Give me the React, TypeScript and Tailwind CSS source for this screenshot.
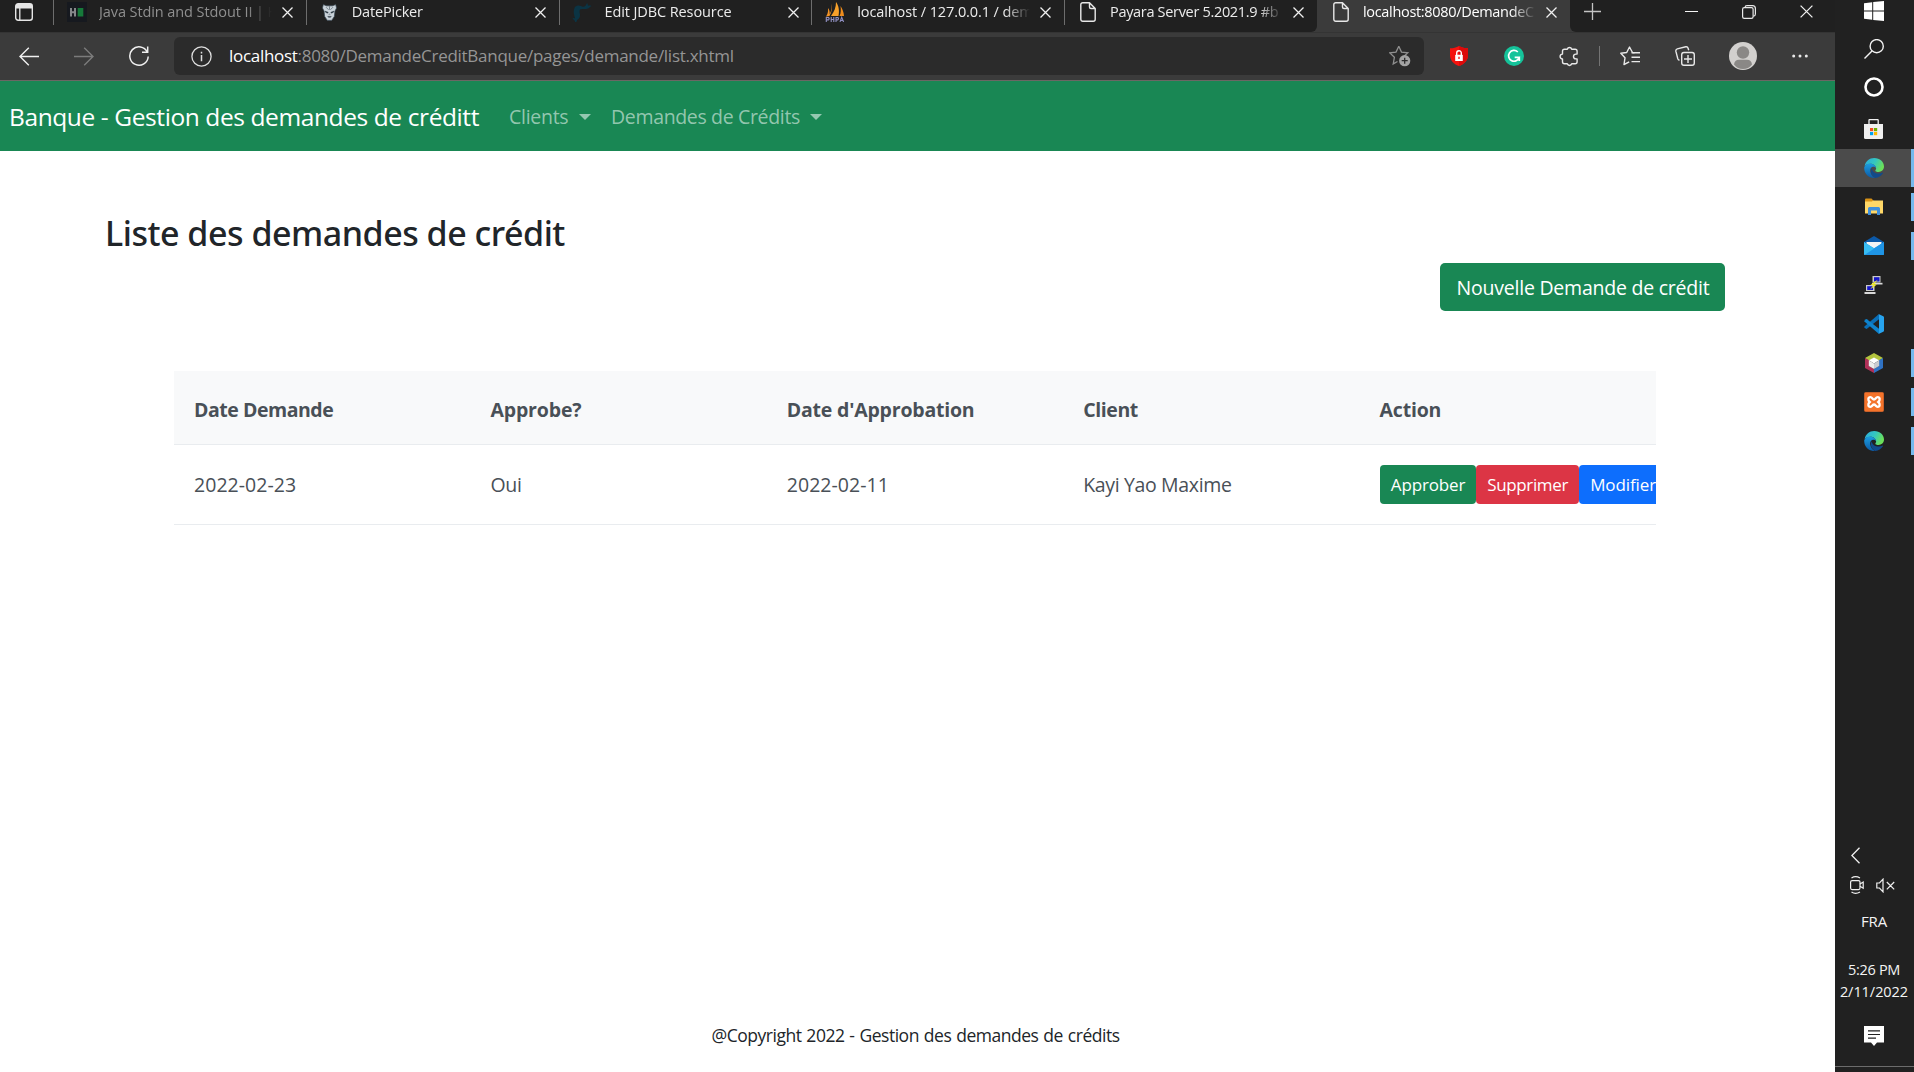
import type { ReactNode } from "react";

/* ---------- browser chrome icons ---------- */

const CloseX = ({ size = 11, width = 1.3 }: { size?: number; width?: number }) => (
  <svg width={size} height={size} viewBox="0 0 11 11" fill="none" stroke="#f0f0f0" strokeWidth={width} className="shrink-0">
    <path d="M.5.5l10 10M10.500.5l-10 10" />
  </svg>
);

const FileIcon = () => (
  <svg width="16" height="20" viewBox="0 0 16 20" fill="none" stroke="#e8e8e8" strokeWidth="1.4" strokeLinejoin="round">
    <path d="M9.500.8H2.700A1.900 1.900 0 0 0 .8 2.700v14.600a1.900 1.900 0 0 0 1.900 1.900h10.600a1.900 1.900 0 0 0 1.900-1.900V6.500zM9.500.8v4.200a1.500 1.500 0 0 0 1.500 1.500h4.200" />
  </svg>
);

const HackerRankIcon = () => (
  <svg width="20" height="20" viewBox="0 0 20 20">
    <rect width="20" height="20" fill="#16191f" />
    <path d="M4 6v8.500M8 6v8.500M4 10.300h4" stroke="#85878a" strokeWidth="2" fill="none" />
    <rect x="10.700" y="6" width="5.600" height="8.500" fill="#167a3a" />
  </svg>
);

const PrimeFacesIcon = () => (
  <svg width="15" height="18" viewBox="0 0 17 20">
    <path d="M1.500 1.500L5 3h7L15.500 1.500l1 4-1.800 3.500-.7 6L11 19.500H6L3 15l-.7-6L.5 5.500z" fill="#c9d2d9" stroke="#33424d" strokeWidth=".8" />
    <path d="M3.300 9l3.700 1.300-.5 1L4.300 10.500zM13.700 9L10 10.300l.5 1 2.200-.8zM6.500 15h4l-.8 1H7.300z" fill="#2a3640" stroke="#2a3640" strokeWidth=".5" />
    <path d="M4.500 4.500l3 3M12.500 4.500l-3 3M8.500 3.500v4M7.500 12.500h2" fill="none" stroke="#56646e" strokeWidth=".8" />
  </svg>
);

const PayaraIcon = () => (
  <svg width="20" height="20" viewBox="0 0 20 20">
    <path d="M3.500 4.500C5 3 8 3.300 10 4.500c2.500.8 4-.8 5-3.500.8 1 1 2 1 2.800 1-.3 2.300-.3 3.500.2-1.500.6-2 1.800-3.500 2.500-2 1-5 .3-7.500.8-1.500 1-1 3.200-.5 5.200.3 2.300-1 4.500-3 5.500.3 1-.5 2-2 2.500.2-1-.2-2-1-2.500-.8-.6-1.300-1.500-1.500-2.500.8.7 1.800 1 2.500.6C2.500 14 1.500 11.500 1.800 9 2 7 2.500 5.500 3.500 4.500z" fill="#0b3444" />
  </svg>
);

const PhpMyAdminIcon = () => (
  <svg width="20" height="20" viewBox="0 0 20 20">
    <path d="M6.500 1.500C7.500 5 7 9.500 4.500 14L1 14.500C3.500 11 3 8 3 6c1.500 2 2 4 1.500 6.500C6.500 9 7 5 6.500 1.500z" fill="#f39325" />
    <path d="M11 0c3 4 3.500 9 2.500 14H6C9.500 9.500 11 5 11 0z" fill="#f8a12a" />
    <path d="M15.500 4c2 3 3.300 6 3.500 10h-4.500c1.500-3 1.500-6.500 1-10z" fill="#ef8d1d" />
    <path d="M1.300 20v-4.500h2.200q1.300 1.200 0 2.400H1.300M6.200 15v5M6.200 17.500h2.600M8.800 15v5M11 20v-4.500h1.800q1.300 1.200 0 2.400H11M15 20l1.700-4.800L18.600 20M15.700 18.500h2.300" fill="none" stroke="#8f8ec0" strokeWidth="1.100" />
  </svg>
);

/* ---------- tabs ---------- */

type Tab = { icon: ReactNode; title: ReactNode; active?: boolean };

const tabs: Tab[] = [
  { icon: <HackerRankIcon />, title: <span className="tracking-[-0.09px] text-[#8f8f8f]">Java Stdin and Stdout II | H</span> },
  { icon: <PrimeFacesIcon />, title: <span className="tracking-[-0.19px]">DatePicker</span> },
  { icon: <PayaraIcon />, title: <span className="tracking-[-0.1px]">Edit JDBC Resource</span> },
  { icon: <PhpMyAdminIcon />, title: <span className="tracking-[-0.1px]">localhost / 127.0.0.1 / dem</span> },
  { icon: <FileIcon />, title: <span className="tracking-[-0.32px]">Payara Server 5.2021.9 #b</span> },
  { icon: <FileIcon />, title: <span className="tracking-[-0.32px] text-white">localhost:8080/DemandeC</span>, active: true },
];

const TabStrip = () => (
  <div className="flex h-8 bg-[#202020]">
    <div className="flex w-[53px] shrink-0 pt-[3px] pl-[15px]">
      <svg width="18" height="18" viewBox="0 0 18 18">
        <rect x=".7" y=".7" width="16.600" height="16.600" rx="2.500" fill="none" stroke="#e6e6e6" strokeWidth="1.400" />
        <path d="M1 1h16v4.500H1z" fill="#e6e6e6" />
        <path d="M4.800 5v12" stroke="#e6e6e6" strokeWidth="1.300" />
      </svg>
    </div>
    {tabs.map((t, i) => (
      <div
        key={i}
        className={
          t.active
            ? "flex h-8 w-[253px] shrink-0 bg-[#3b3b3b]"
            : i === 4
              ? "flex h-8 w-[253px] shrink-0 bg-[linear-gradient(to_right,#202020_50%,#3b3b3b_50%)]"
              : "flex h-8 w-[252.750px] shrink-0"
        }
      >
        <div className={i === 4 ? "flex w-full rounded-br-md bg-[#202020]" : "flex w-full"}>
          <div className={t.active ? "h-[25px] w-px shrink-0" : "h-[25px] w-px shrink-0 bg-[#6d6d6d]"} />
          <div className="flex h-6 w-[45px] shrink-0 items-center justify-center">
            <div className="flex w-5 justify-center">{t.icon}</div>
          </div>
          <div className="h-6 w-[175px] shrink-0 text-[14.5px] leading-6 whitespace-nowrap text-[#ececec] [mask-image:linear-gradient(to_right,black_148px,transparent_173px)]">
            {t.title}
          </div>
          <div className="flex h-[25px] w-[24px] shrink-0 items-center justify-end pr-[5px]">
            <CloseX />
          </div>
        </div>
      </div>
    ))}
    <div className="flex flex-1 bg-[#3b3b3b]">
      <div className="flex h-8 flex-1 rounded-bl-md bg-[#202020]">
        <div className="flex h-[23px] w-[45px] items-center justify-center">
          <svg width="17" height="17" viewBox="0 0 17 17" stroke="#c4c4c4" strokeWidth="1.300">
            <path d="M8.500 0v17M0 8.500h17" />
          </svg>
        </div>
        <div className="ml-auto flex h-[23px] w-[172px] items-center">
          <div className="flex w-[57.300px] justify-center">
            <svg width="13" height="1" className="bg-[#f5f5f5]" />
          </div>
          <div className="flex w-[57.300px] justify-center">
            <svg width="14" height="14" viewBox="0 0 14 14" fill="none" stroke="#e8e8e8" strokeWidth="1.200">
              <rect x=".6" y="2.600" width="10.500" height="10.800" rx="1.600" />
              <path d="M3 2.500Q3.100.6 5 .6h5.500q2.900 0 2.900 2.900V9q0 2-2 2.200" />
            </svg>
          </div>
          <div className="flex w-[57.300px] justify-center">
            <CloseX size={13} width={1.1} />
          </div>
        </div>
      </div>
    </div>
  </div>
);

/* ---------- toolbar ---------- */

const Toolbar = () => (
  <div className="flex h-[49px] items-center border-t border-b border-t-[#343434] border-b-[#6b6664] bg-[#3b3b3b] pb-px">
    <div className="flex w-[174px] shrink-0 items-center">
      <svg width="20" height="19" viewBox="0 0 20 19" fill="none" stroke="#f0f0f0" strokeWidth="1.400" className="ml-[19px]">
        <path d="M20 9.500H1M9.800.8L1 9.500l8.800 8.700" />
      </svg>
      <svg width="20" height="19" viewBox="0 0 20 19" fill="none" stroke="#7b7b7b" strokeWidth="1.400" className="ml-[35px]">
        <path d="M0 9.500h19M10.200.8L19 9.500l-8.800 8.700" />
      </svg>
      <svg width="20" height="21" viewBox="0 0 20 21" fill="none" stroke="#f0f0f0" strokeWidth="1.500" className="ml-[35px]">
        <path d="M18.300 6A9.200 9.200 0 1 0 19.200 10.500M18.700.5V6.200H13" />
      </svg>
    </div>
    <div className="flex h-[38px] w-[1250px] shrink-0 items-center rounded-[6px] bg-[#2b2b2b] pr-[13px] pl-[17px]">
      <svg width="21" height="21" viewBox="0 0 21 21" fill="none" stroke="#dedede" strokeWidth="1.300">
        <circle cx="10.500" cy="10.500" r="9.600" />
        <path d="M10.500 9v6.300M10.500 5.800v1.600" strokeWidth="1.500" />
      </svg>
      <div className="ml-[17px] pb-px text-[17px] leading-6 tracking-[-0.27px] whitespace-nowrap text-[#959595]">
        <span className="tracking-[-0.3px] text-white">localhost</span>:8080/DemandeCreditBanque/pages/demande/list.xhtml
      </div>
      <svg width="22" height="22" viewBox="0 0 22 22" className="ml-auto">
        <path d="M9.800 1.200l2.700 5.900 6.300.7-3.300 3.100M9.800 1.200L7 7.100.8 7.900l4.600 4.400-1.200 6.600 4.300-2.400" fill="none" stroke="#8f8f8f" strokeWidth="1.300" />
        <circle cx="15.700" cy="15.700" r="5.600" fill="#a3a3a3" />
        <path d="M15.700 12.700v6M12.700 15.700h6" stroke="#2b2b2b" strokeWidth="1.300" />
      </svg>
    </div>
    <svg width="18" height="20" viewBox="0 0 18 20" className="ml-[26px] shrink-0">
      <path d="M9 0c2.700 1.800 6 2.300 9 2.300V9c0 5.500-3.500 9-9 11-5.500-2-9-5.500-9-11V2.300C3 2.300 6.300 1.800 9 0z" fill="#f4130f" />
      <path d="M9 0c2.700 1.800 6 2.300 9 2.300V9c0 5.500-3.500 9-9 11z" fill="#dc0a0a" />
      <rect x="5.200" y="8.700" width="7.600" height="6.300" rx=".6" fill="#fff" />
      <path d="M6.700 9V7a2.300 2.300 0 0 1 4.600 0v2" fill="none" stroke="#fff" strokeWidth="1.400" />
      <path d="M9 10.700v2.200" stroke="#f4130f" strokeWidth="1.300" />
    </svg>
    <svg width="20" height="20" viewBox="0 0 20 20" className="ml-[36px] shrink-0">
      <circle cx="10" cy="10" r="10" fill="#15c39a" />
      <path d="M13.800 6A5.400 5.400 0 1 0 15.200 11.300H10.700M15.300 11v4" fill="none" stroke="#fff" strokeWidth="1.700" />
    </svg>
    <svg width="19" height="21" viewBox="0 0 19 21" fill="none" stroke="#e8e8e8" strokeWidth="1.400" strokeLinejoin="round" className="ml-[35px] shrink-0">
      <path d="M8.300 3.200a2.300 2.300 0 0 1 4.400 0h3.400q2 0 2 2v2.900h-1.200a2.400 2.400 0 0 0 0 4.800h1.200v2.900q0 2-2 2h-3.400a2.300 2.300 0 0 1-4.400 0H5.500q-2 0-2-2v-2.900a2.400 2.400 0 0 1 0-4.800V5.200q0-2 2-2z" />
    </svg>
    <div className="ml-[21px] h-5 w-px shrink-0 bg-[#747474]" />
    <svg width="20" height="20" viewBox="0 0 20 20" fill="none" stroke="#e8e8e8" strokeWidth="1.400" className="ml-[20px] shrink-0">
      <path d="M14.500 6.700l-2-.2L9.500 1l-2.800 5.500L.8 7.300l4.200 4.500L4 18.500l5.200-2.600" strokeLinejoin="round" />
      <path d="M11.500 6.800H20M11.500 11.200H20M11.500 15.600H20" />
    </svg>
    <svg width="20" height="20" viewBox="0 0 20 20" fill="none" stroke="#e8e8e8" strokeWidth="1.400" className="ml-[35px] shrink-0">
      <rect x="6.700" y="6.500" width="12.600" height="12.700" rx="2.200" />
      <path d="M13 9v8M9 13h8" />
      <path d="M4.500 14.300Q3.200 14 2.800 12.700L.9 5.400Q.5 3.400 2.300 2.900L10.800.8q1.800-.3 2.300 1.400L13.700 4.300" />
    </svg>
    <svg width="28" height="28" viewBox="0 0 28 28" className="ml-[34px] shrink-0">
      <circle cx="14" cy="14" r="14" fill="#d2d0ce" />
      <circle cx="14" cy="10.500" r="6.200" fill="#8a8886" />
      <path d="M5 22.500Q5.500 17.800 10 17.800h8q4.500 0 5 4.700Q19.500 27 14 27T5 22.500z" fill="#8a8886" />
    </svg>
    <svg width="16" height="4" viewBox="0 0 16 4" fill="#e8e8e8" className="ml-[35px] shrink-0">
      <circle cx="1.700" cy="2" r="1.500" />
      <circle cx="8" cy="2" r="1.500" />
      <circle cx="14.300" cy="2" r="1.500" />
    </svg>
  </div>
);

/* ---------- web page ---------- */

const Caret = () => <span className="h-0 w-0 border-x-[6px] border-t-[6px] border-x-transparent border-t-current" />;

const Navbar = () => (
  <nav className="flex h-[70px] items-center bg-[#198754] pt-[2px] pl-[9px] whitespace-nowrap">
    <a className="w-[500px] text-[24.5px] leading-9 tracking-[-0.4px] text-white">Banque - Gestion des demandes de créditt</a>
    <a className="flex w-[102px] items-center text-[19.500px] tracking-[-0.28px] text-[#a3cfbb]/90">
      <span className="w-[70px]">Clients</span>
      <Caret />
    </a>
    <a className="flex items-center text-[19.500px] tracking-[-0.34px] text-[#a3cfbb]/90">
      <span className="w-[199px]">Demandes de Crédits</span>
      <Caret />
    </a>
  </nav>
);

const columns = [
  <span className="tracking-[-0.46px]">Date Demande</span>,
  <span className="tracking-[-0.15px]">Approbe?</span>,
  <span className="tracking-[-0.2px]">Date d'Approbation</span>,
  <span className="tracking-[-0.4px]">Client</span>,
  <span className="tracking-[-0.2px]">Action</span>,
];

const Page = () => (
  <main className="flex flex-1 flex-col bg-white">
    <Navbar />
    <h2 className="mt-[61px] ml-[105px] font-['Noto_Sans'] text-[34px] leading-[42px] font-medium tracking-[-0.48px] text-[#212529]">
      Liste des demandes de crédit
    </h2>
    <div className="mt-[9px] flex justify-end pr-[110px]">
      <button className="h-12 w-[285px] rounded-[5px] bg-[#198754] pt-[2px] pl-px text-[19.5px] tracking-[-0.23px] text-white">
        Nouvelle Demande de crédit
      </button>
    </div>
    <div className="mt-[60px] ml-[174px] w-[1482px] text-[19.500px] text-[#495057]">
      <div className="grid h-[74px] grid-cols-5 items-center border-b border-[#e9ecef] bg-[#f8f9fa] pt-[4px] font-bold">
        {columns.map((c, i) => (
          <div key={i} className="pl-5">{c}</div>
        ))}
      </div>
      <div className="grid h-20 grid-cols-5 items-center border-b border-[#e9ecef]">
        <div className="pl-5 tracking-[0.04px]">2022-02-23</div>
        <div className="pl-5 tracking-[-0.3px]">Oui</div>
        <div className="pl-5 tracking-[0.04px]">2022-02-11</div>
        <div className="pl-5 tracking-[-0.35px]">Kayi Yao Maxime</div>
        <div className="flex overflow-hidden pl-5 text-[17px] text-white">
          <button className="h-[39px] w-[96px] shrink-0 rounded bg-[#198754] pl-px tracking-[-0.14px]">Approber</button>
          <button className="h-[39px] w-[103px] shrink-0 rounded bg-[#dc3545] pl-px tracking-[-0.36px]">Supprimer</button>
          <button className="h-[39px] w-[89px] shrink-0 rounded bg-[#0d6efd] tracking-[-0.1px]">Modifier</button>
        </div>
      </div>
    </div>
    <footer className="mt-auto mb-[24px] pr-1 text-center text-[17.5px] leading-[26px] tracking-[-0.47px] text-[#212529] [word-spacing:0.8px]">
      @Copyright 2022&nbsp;- Gestion des demandes de crédits
    </footer>
  </main>
);

/* ---------- taskbar ---------- */

const EdgeIcon = ({ id }: { id: string }) => (
  <svg width="20" height="20" viewBox="0 0 256 256">
    <defs>
      <linearGradient id={id + "a"} x1="0" y1="0" x2="1" y2=".4">
        <stop offset="0" stopColor="#2aa8e0" />
        <stop offset=".55" stopColor="#34c7c0" />
        <stop offset="1" stopColor="#6be05a" />
      </linearGradient>
      <linearGradient id={id + "b"} x1="0" y1="0" x2="0" y2="1">
        <stop offset="0" stopColor="#1b9de2" />
        <stop offset="1" stopColor="#0c59a4" />
      </linearGradient>
    </defs>
    <path d="M8 105C18 40 70 0 130 0c75 0 126 52 126 108 0 42-33 70-70 70-25 0-41-8-41-16 0-6 10-10 10-30 0-30-33-60-72-60C45 72 20 88 8 105z" fill={`url(#${id}a)`} />
    <path d="M3 118C12 90 44 70 84 72c39 1 70 28 71 58-8-12-22-18-36-18-28 0-43 26-40 58 4 44 34 72 62 86-80 8-144-58-138-138z" fill={`url(#${id}b)`} />
    <path d="M100 130c-22 25-18 95 45 126 42-6 75-28 97-62 4-7-1-9-6-6-14 7-29 10-45 10-56 0-90-30-91-68z" fill="#114a8b" />
  </svg>
);

const WindowsIcon = () => (
  <svg width="20" height="20" viewBox="0 0 20 20" fill="#fff">
    <path d="M0 2.200l8.200-1v8.300H0zM9.200 1.100L20 0v9.500H9.200zM0 10.500h8.200v8.300L0 17.800zM9.200 10.500H20V20L9.200 18.900z" />
  </svg>
);

const SearchIcon = () => (
  <svg width="20" height="20" viewBox="0 0 20 20" fill="none" stroke="#f2f2f2" strokeWidth="1.400">
    <circle cx="12.700" cy="7.200" r="6.600" />
    <path d="M8 12L.5 19.500" />
  </svg>
);

const CortanaIcon = () => (
  <svg width="20" height="20" viewBox="0 0 20 20" fill="none">
    <circle cx="10" cy="10" r="8.500" stroke="#fff" strokeWidth="2.600" />
  </svg>
);

const StoreIcon = () => (
  <svg width="20" height="20" viewBox="0 0 20 20">
    <path d="M5 5V1.200q0-.6.6-.6h8q.6 0 .6.600V5" fill="none" stroke="#f0f0f0" strokeWidth="1.300" />
    <path d="M0 5h19v13.500q0 1.500-1.500 1.500h-16Q0 20 0 18.500z" fill="#f0f0f0" />
    <path d="M6 9h3.200v3.200H6z" fill="#f25022" />
    <path d="M10 9h3.200v3.200H10z" fill="#6bb100" />
    <path d="M6 13h3.200v3.200H6z" fill="#00a4ef" />
    <path d="M10 13h3.200v3.200H10z" fill="#ffb900" />
  </svg>
);

const ExplorerIcon = () => (
  <svg width="20" height="17" viewBox="0 0 20 17">
    <path d="M1 1.500Q1 .5 2 .5h5.500l1.800 2V5H1z" fill="#d89216" />
    <path d="M1 3.500h7l1-1h10v13H1z" fill="#ffd868" />
    <path d="M4 17v-6.500q0-1.500 1.500-1.500h9q1.500 0 1.500 1.500V17h-3v-4.500H7V17z" fill="#3f8fdc" />
  </svg>
);

const MailIcon = () => (
  <svg width="20" height="19" viewBox="0 0 20 19">
    <path d="M10 0L20 6v4H0V6z" fill="#0c59a8" />
    <path d="M2.500 6h15v3l-7.500 4L2.500 9z" fill="#f4f4f4" />
    <path d="M0 6l10 6.200L20 6v12q0 1-1 1H1q-1 0-1-1z" fill="#1f9bea" />
    <path d="M0 6l10 6.200L19.500 18.900Q19.300 19 19 19H1q-1 0-1-1z" fill="#38bdf4" />
    <path d="M.5 19L20 6v12q0 1-1 1z" fill="#1f95e6" />
  </svg>
);

const PuttyIcon = () => (
  <svg width="20" height="20" viewBox="0 0 20 20">
    <path d="M8.500 1h8v6.500h-8z" fill="#c9c9c9" />
    <path d="M10 2.200h5.500v4.300H10z" fill="#1414c8" />
    <path d="M8 7.800h10.500v1.700H8z" fill="#d8d8d8" />
    <path d="M2 10h8.500v6H2z" fill="#c9c9c9" />
    <path d="M3.200 11.200H9v3.800H3.200z" fill="#1414c8" />
    <path d="M.5 17h11v2H.5z" fill="#d8d8d8" />
    <path d="M14 4.500L6.500 9.800l3 .2-3.500 4.500 7-5-3-.3z" fill="#f4ee22" />
  </svg>
);

const VSCodeIcon = () => (
  <svg width="20" height="20" viewBox="0 0 20 20">
    <path d="M.3 13.300l1.600 1.500q.5.300 1 0L15 5.200V0L.4 12.500q-.4.400-.1.800z" fill="#0a6fb8" />
    <path d="M.3 6.700l1.600-1.500q.5-.3 1 0L15 14.800V20L.4 7.500q-.4-.4-.1-.8z" fill="#0f83cd" />
    <path d="M14.500 0l4.800 2.200q.7.300.7 1v13.600q0 .7-.7 1L14.500 20q.5-.4.500-1V1q0-.6-.5-1z" fill="#27a3ee" />
  </svg>
);

const NetBeansIcon = () => (
  <svg width="20" height="20" viewBox="0 0 20 20">
    <path d="M10 0l9 5-4 2.800L10 5 5 7.800 1 5z" fill="#b4c53f" />
    <path d="M1 5l4 2.300V13l5 3v4l-9-5z" fill="#b03058" />
    <path d="M19 5v10l-9 5v-4l5-3V7.300z" fill="#2f72c4" />
    <path d="M10 4.500l5.200 2.800L10 10.500 4.800 7.300z" fill="#fff" />
    <path d="M4.800 7.300L10 10.500V16l-5.200-3z" fill="#ececec" />
    <path d="M15.200 7.300L10 10.500V16l5.200-3z" fill="#c9cbd0" />
  </svg>
);

const XamppIcon = () => (
  <svg width="20" height="20" viewBox="0 0 20 20">
    <rect x=".5" y=".5" width="19" height="19" rx="1" fill="#f4732a" stroke="#c9602a" />
    <path d="M6.300 5.200c2.200 0 2 2.300 3.700 2.300s1.500-2.300 3.700-2.300 2.800 3 .6 4.800c2.200 1.800 1.600 4.800-.6 4.800s-2-2.300-3.700-2.300-1.500 2.300-3.700 2.300-2.800-3-.6-4.800C3.500 8.200 4.100 5.200 6.300 5.200z" fill="none" stroke="#fff" strokeWidth="2.300" />
  </svg>
);

const pinned: { icon: ReactNode; open?: boolean }[] = [
  { icon: <ExplorerIcon />, open: true },
  { icon: <MailIcon />, open: true },
  { icon: <PuttyIcon /> },
  { icon: <VSCodeIcon /> },
  { icon: <NetBeansIcon />, open: true },
  { icon: <XamppIcon />, open: true },
  { icon: <EdgeIcon id="e2" />, open: true },
];

const Taskbar = () => (
  <aside className="flex w-[79px] shrink-0 flex-col bg-[#212121] text-[#f4f4f4]">
    <div className="flex h-[22px] items-center pl-[29px]"><WindowsIcon /></div>
    <div className="flex h-[54px] items-center pl-[29px]"><SearchIcon /></div>
    <div className="flex h-[22px] items-center pl-[29px]"><CortanaIcon /></div>
    <div className="mt-[11px] flex h-10 items-center pl-[29px]"><StoreIcon /></div>
    <div className="flex h-[38px] items-center border-r-[3px] border-[#76b9ed] bg-[#4b4b4b] pl-[29px]"><EdgeIcon id="e1" /></div>
    {pinned.map((p, i) => (
      <div key={i} className="flex h-[39px] items-center">
        <div className="flex w-[76px] pl-[29px]">{p.icon}</div>
        <div className={p.open ? "h-7 w-[3px] bg-[#76b9ed]" : "h-7 w-[3px]"} />
      </div>
    ))}
    <div className="mt-auto flex h-[17px] pl-4">
      <svg width="9" height="17" viewBox="0 0 9 17" fill="none" stroke="#f0f0f0" strokeWidth="1.300">
        <path d="M8.500.7L.9 8.500l7.600 7.800" />
      </svg>
    </div>
    <div className="mt-3 flex h-[18px] items-center pl-[15px]">
      <svg width="14" height="18" viewBox="0 0 14 18" fill="none" stroke="#f0f0f0" strokeWidth="1.200">
        <rect x=".6" y="4.600" width="9.400" height="9" rx="1.500" />
        <path d="M10 8l3.200-2v6.200L10 10.200M1.500 2Q5.500-.6 10 2M1.500 16Q5.500 18.600 10 16" />
      </svg>
      <svg width="20" height="15" viewBox="0 0 20 15" fill="none" stroke="#f0f0f0" strokeWidth="1.200" className="ml-[12px]">
        <path d="M.8 5h2.700L7 1.200v12.600L3.500 10H.8zM10.800 4l7.400 7.400M18.200 4l-7.400 7.400" />
      </svg>
    </div>
    <div className="mt-[15px] h-6 pr-px text-center text-[15px] leading-6 tracking-[-0.15px]">FRA</div>
    <div className="mt-[26px] pr-px text-center text-[14.5px] leading-[22px] whitespace-nowrap">
      <div className="tracking-[-0.3px]">5:26 PM</div>
      <div className="tracking-[-0.05px]">2/11/2022</div>
    </div>
    <div className="mt-[23px] flex h-5 pl-[29px]">
      <svg width="20" height="20" viewBox="0 0 20 20">
        <path d="M0 0h20v16.500h-7L10 20l-3-3.500H0z" fill="#fff" />
        <path d="M4 4.800h12M4 8.500h12M4 12.200h8" stroke="#212121" strokeWidth="1.200" />
      </svg>
    </div>
    <div className="mt-5 h-[6px] border-t border-[#6c6c6c]" />
  </aside>
);

export default function App() {
  return (
    <div className="flex h-[1072px] w-[1914px] overflow-hidden font-['Open_Sans','Noto_Sans',sans-serif]">
      <div className="flex w-[1835px] shrink-0 flex-col">
        <TabStrip />
        <Toolbar />
        <Page />
      </div>
      <Taskbar />
    </div>
  );
}
